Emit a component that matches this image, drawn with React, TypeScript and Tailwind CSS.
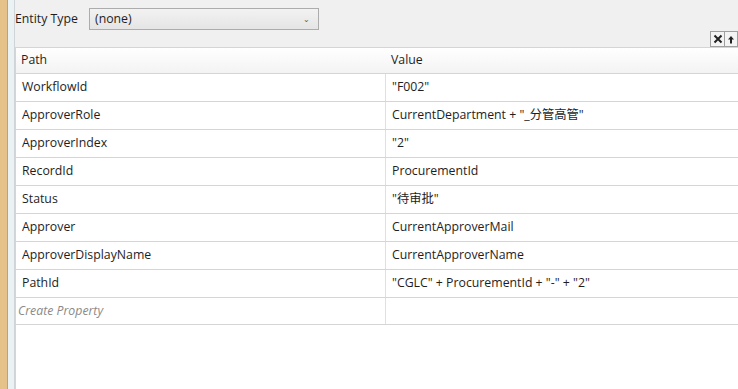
const rows: [string, string][] = [
  ['WorkflowId', '"F002"'],
  ['ApproverRole', 'CurrentDepartment + "_分管高管"'],
  ['ApproverIndex', '"2"'],
  ['RecordId', 'ProcurementId'],
  ['Status', '"待审批"'],
  ['Approver', 'CurrentApproverMail'],
  ['ApproverDisplayName', 'CurrentApproverName'],
  ['PathId', '"CGLC" + ProcurementId + "-" + "2"'],
];

export default function App() {
  return (
    <div
      className="flex w-[738px] h-[389px] overflow-hidden bg-[#f0f0f0] text-[12.3px] text-[#1e1e1e]"
      style={{ fontFamily: '"Open Sans", "Noto Sans CJK SC", sans-serif' }}
    >
      <div className="w-[8px] shrink-0 bg-[#e4c28a] border-r border-[#c9a15f]" />
      <div className="w-[7px] shrink-0 bg-[#eaf2f4] border-r border-[#d0d4d6]" />
      <div className="flex-1 flex flex-col min-w-0">
        <div className="flex items-center h-[38px]">
          <span className="w-[74px]">Entity Type</span>
          <div className="flex items-center justify-between w-[230px] h-[22px] border border-[#acacac] bg-gradient-to-b from-[#f2f2f2] to-[#e5e5e5] pl-[5px] pr-[8px]">
            <span>(none)</span>
            <span className="text-[8px] text-[#606060]">⌄</span>
          </div>
        </div>
        <div className="flex justify-end h-[9px] relative">
          <div className="absolute right-0 top-[-7px] flex">
            <div className="w-[15px] h-[16px] border border-[#a0a0a0] bg-[#f4f4f4] flex items-center justify-center">
              <svg width="10" height="10" viewBox="0 0 10 10"><path d="M1.5 1.5L8.5 8.5M8.5 1.5L1.5 8.5" stroke="#222" strokeWidth="2" /></svg>
            </div>
            <div className="w-[13px] h-[16px] border border-l-0 border-[#a0a0a0] bg-[#f4f4f4] flex items-center justify-center">
              <svg width="8" height="9" viewBox="0 0 8 9"><path d="M4 1L1 4.5H3V8.5H5V4.5H7Z" fill="#222" /></svg>
            </div>
          </div>
        </div>
        <div className="flex-1 bg-white border-l border-t border-[#d5d5d5]">
          <div className="flex h-[26px] bg-gradient-to-b from-white to-[#f3f3f3] border-b border-[#d5d5d5]">
            <div className="w-[370px] pl-[5px] flex items-center">Path</div>
            <div className="flex-1 pl-[5px] flex items-center">Value</div>
          </div>
          {rows.map(([p, v]) => (
            <div key={p} className="flex h-[28px] border-b border-[#d5d5d5]">
              <div className="w-[370px] pl-[6px] flex items-center border-r border-[#e0e0e0]">{p}</div>
              <div className="flex-1 pl-[6px] flex items-center">{v}</div>
            </div>
          ))}
          <div className="flex h-[27px] border-b border-[#d5d5d5]">
            <div className="w-[370px] pl-[2px] flex items-center border-r border-[#e0e0e0] italic text-[#8a8a8a]">Create Property</div>
            <div className="flex-1" />
          </div>
        </div>
      </div>
    </div>
  );
}
